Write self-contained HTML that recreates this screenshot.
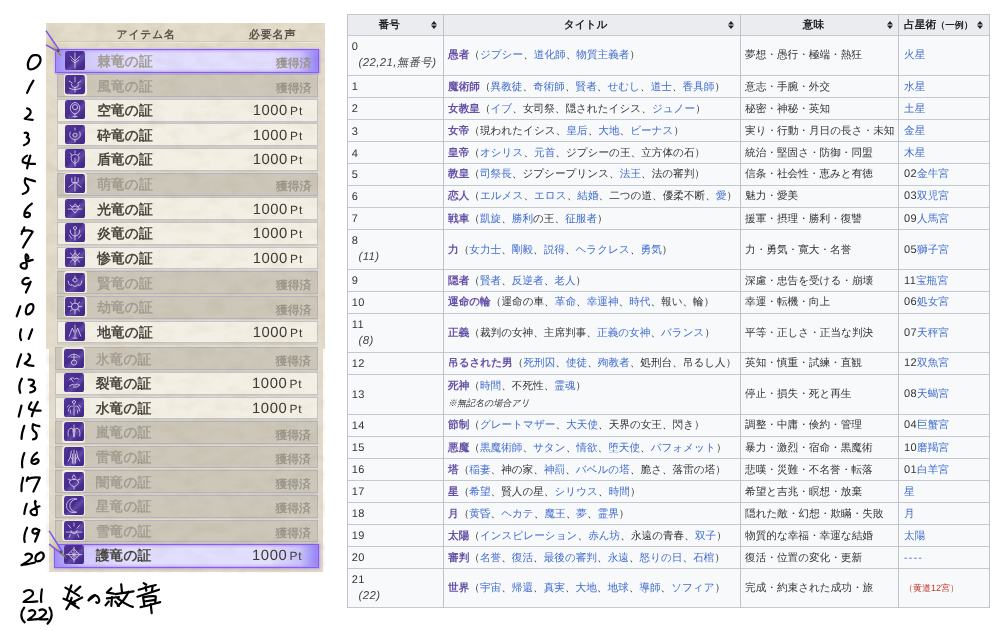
<!DOCTYPE html><html><head><meta charset="utf-8"><style>
*{margin:0;padding:0;box-sizing:border-box}
html,body{width:1000px;height:630px;overflow:hidden;background:#fff;text-rendering:geometricPrecision;font-family:"Liberation Sans",sans-serif;position:relative}
.a{position:absolute}
.hl{position:absolute;height:1px;background:#c4c9d0}
.vl{position:absolute;width:1px;background:#bfc4cc}
.tt{position:absolute;font-size:10.63px;line-height:12px;white-space:nowrap;color:#333}
.th{position:absolute;font-size:10.7px;line-height:12px;white-space:nowrap;color:#222;font-weight:bold}
.b{color:#6551a8;font-weight:bold}
.l{color:#3f6ccf}
.it{font-style:italic;color:#444}
.sort{position:absolute;width:6px;height:8px}
.ic{position:absolute;width:19px;height:19px}
.nm{position:absolute;font-size:13.8px;line-height:16px;font-weight:bold;white-space:nowrap}
.gk{position:absolute;font-size:11.8px;line-height:14px;color:#9d988e;font-weight:bold;white-space:nowrap}
.pt{position:absolute;font-size:14.8px;line-height:16px;color:#3d3b36;white-space:nowrap;letter-spacing:0.55px}
.pt span{font-size:12px;margin-left:2.3px;letter-spacing:0.8px}
</style></head><body>
<div class="a" style="left:347px;top:14px;width:642px;height:593.3px;background:#f8f9fa"></div>
<div class="a" style="left:347px;top:14px;width:642px;height:21.299999999999997px;background:#eaecf0"></div>
<div class="hl" style="left:346.5px;top:13.5px;width:643px"></div>
<div class="hl" style="left:346.5px;top:34.8px;width:643px"></div>
<div class="hl" style="left:346.5px;top:74.8px;width:643px"></div>
<div class="hl" style="left:346.5px;top:97.0px;width:643px"></div>
<div class="hl" style="left:346.5px;top:119.0px;width:643px"></div>
<div class="hl" style="left:346.5px;top:141.2px;width:643px"></div>
<div class="hl" style="left:346.5px;top:162.9px;width:643px"></div>
<div class="hl" style="left:346.5px;top:184.6px;width:643px"></div>
<div class="hl" style="left:346.5px;top:206.8px;width:643px"></div>
<div class="hl" style="left:346.5px;top:228.9px;width:643px"></div>
<div class="hl" style="left:346.5px;top:268.9px;width:643px"></div>
<div class="hl" style="left:346.5px;top:290.8px;width:643px"></div>
<div class="hl" style="left:346.5px;top:312.7px;width:643px"></div>
<div class="hl" style="left:346.5px;top:351.7px;width:643px"></div>
<div class="hl" style="left:346.5px;top:373.6px;width:643px"></div>
<div class="hl" style="left:346.5px;top:413.6px;width:643px"></div>
<div class="hl" style="left:346.5px;top:435.6px;width:643px"></div>
<div class="hl" style="left:346.5px;top:458.1px;width:643px"></div>
<div class="hl" style="left:346.5px;top:480.0px;width:643px"></div>
<div class="hl" style="left:346.5px;top:502.0px;width:643px"></div>
<div class="hl" style="left:346.5px;top:524.0px;width:643px"></div>
<div class="hl" style="left:346.5px;top:546.0px;width:643px"></div>
<div class="hl" style="left:346.5px;top:567.9px;width:643px"></div>
<div class="hl" style="left:346.5px;top:606.8px;width:643px"></div>
<div class="vl" style="left:346.5px;top:14px;height:593.8px"></div>
<div class="vl" style="left:442.8px;top:14px;height:593.8px"></div>
<div class="vl" style="left:740.0px;top:14px;height:593.8px"></div>
<div class="vl" style="left:897.8px;top:14px;height:593.8px"></div>
<div class="vl" style="left:988.5px;top:14px;height:593.8px"></div>
<div class="th" style="left:350px;width:78.30000000000001px;top:18.8px;text-align:center">番号</div>
<svg class="sort" style="left:431.3px;top:20.6px" viewBox="0 0 7 9" preserveAspectRatio="none"><path d="M3.5 0 L7 4 L0 4 Z M0 5 L7 5 L3.5 9 Z" fill="#222"/></svg>
<div class="th" style="left:446.0px;width:279.2px;top:18.8px;text-align:center">タイトル</div>
<svg class="sort" style="left:728.3px;top:20.6px" viewBox="0 0 7 9" preserveAspectRatio="none"><path d="M3.5 0 L7 4 L0 4 Z M0 5 L7 5 L3.5 9 Z" fill="#222"/></svg>
<div class="th" style="left:743.5px;width:139.79999999999995px;top:18.8px;text-align:center">意味</div>
<svg class="sort" style="left:886.7px;top:20.6px" viewBox="0 0 7 9" preserveAspectRatio="none"><path d="M3.5 0 L7 4 L0 4 Z M0 5 L7 5 L3.5 9 Z" fill="#222"/></svg>
<div class="th" style="left:904px;top:18.8px">占星術<span style="font-size:9.2px">（一例）</span></div>
<svg class="sort" style="left:976.7px;top:20.6px" viewBox="0 0 7 9" preserveAspectRatio="none"><path d="M3.5 0 L7 4 L0 4 Z M0 5 L7 5 L3.5 9 Z" fill="#222"/></svg>
<div class="tt" style="left:351.8px;top:40.6px;font-size:11px;letter-spacing:0.4px">0</div>
<div class="tt it" style="left:358.5px;top:57.3px;font-size:11.4px;letter-spacing:0.4px">(22,21,無番号)</div>
<div class="tt" style="left:448px;top:49.4px"><span class="b">愚者</span>（<span class="l">ジプシー</span>、<span class="l">道化師</span>、<span class="l">物質主義者</span>）</div>
<div class="tt" style="left:745px;top:49.4px">夢想・愚行・極端・熱狂</div>
<div class="tt" style="left:904px;top:49.4px"><span class="l">火星</span></div>
<div class="tt" style="left:351.8px;top:81.3px;font-size:11px;letter-spacing:0.4px">1</div>
<div class="tt" style="left:448px;top:80.5px"><span class="b">魔術師</span>（<span class="l">異教徒</span>、<span class="l">奇術師</span>、<span class="l">賢者</span>、<span class="l">せむし</span>、<span class="l">道士</span>、<span class="l">香具師</span>）</div>
<div class="tt" style="left:745px;top:80.5px">意志・手腕・外交</div>
<div class="tt" style="left:904px;top:80.5px"><span class="l">水星</span></div>
<div class="tt" style="left:351.8px;top:103.4px;font-size:11px;letter-spacing:0.4px">2</div>
<div class="tt" style="left:448px;top:102.6px"><span class="b">女教皇</span>（<span class="l">イブ</span>、女司祭、隠されたイシス、<span class="l">ジュノー</span>）</div>
<div class="tt" style="left:745px;top:102.6px">秘密・神秘・英知</div>
<div class="tt" style="left:904px;top:102.6px"><span class="l">土星</span></div>
<div class="tt" style="left:351.8px;top:125.5px;font-size:11px;letter-spacing:0.4px">3</div>
<div class="tt" style="left:448px;top:124.7px"><span class="b">女帝</span>（現われたイシス、<span class="l">皇后</span>、<span class="l">大地</span>、<span class="l">ビーナス</span>）</div>
<div class="tt" style="left:745px;top:124.7px">実り・行動・月日の長さ・未知</div>
<div class="tt" style="left:904px;top:124.7px"><span class="l">金星</span></div>
<div class="tt" style="left:351.8px;top:147.5px;font-size:11px;letter-spacing:0.4px">4</div>
<div class="tt" style="left:448px;top:146.7px"><span class="b">皇帝</span>（<span class="l">オシリス</span>、<span class="l">元首</span>、ジプシーの王、立方体の石）</div>
<div class="tt" style="left:745px;top:146.7px">統治・堅固さ・防御・同盟</div>
<div class="tt" style="left:904px;top:146.7px"><span class="l">木星</span></div>
<div class="tt" style="left:351.8px;top:169.2px;font-size:11px;letter-spacing:0.4px">5</div>
<div class="tt" style="left:448px;top:168.3px"><span class="b">教皇</span>（<span class="l">司祭長</span>、ジプシープリンス、<span class="l">法王</span>、法の審判）</div>
<div class="tt" style="left:745px;top:168.3px">信条・社会性・恵みと有徳</div>
<div class="tt" style="left:904px;top:168.3px"><span style="font-size:11px;letter-spacing:0.4px">02</span><span class="l">金牛宮</span></div>
<div class="tt" style="left:351.8px;top:191.1px;font-size:11px;letter-spacing:0.4px">6</div>
<div class="tt" style="left:448px;top:190.3px"><span class="b">恋人</span>（<span class="l">エルメス</span>、<span class="l">エロス</span>、<span class="l">結婚</span>、二つの道、優柔不断、<span class="l">愛</span>）</div>
<div class="tt" style="left:745px;top:190.3px">魅力・愛美</div>
<div class="tt" style="left:904px;top:190.3px"><span style="font-size:11px;letter-spacing:0.4px">03</span><span class="l">双児宮</span></div>
<div class="tt" style="left:351.8px;top:213.3px;font-size:11px;letter-spacing:0.4px">7</div>
<div class="tt" style="left:448px;top:212.5px"><span class="b">戦車</span>（<span class="l">凱旋</span>、<span class="l">勝利</span>の王、<span class="l">征服者</span>）</div>
<div class="tt" style="left:745px;top:212.5px">援軍・摂理・勝利・復讐</div>
<div class="tt" style="left:904px;top:212.5px"><span style="font-size:11px;letter-spacing:0.4px">09</span><span class="l">人馬宮</span></div>
<div class="tt" style="left:351.8px;top:234.7px;font-size:11px;letter-spacing:0.4px">8</div>
<div class="tt it" style="left:358.5px;top:251.4px;font-size:11.4px;letter-spacing:0.4px">(11)</div>
<div class="tt" style="left:448px;top:243.5px"><span class="b">力</span>（<span class="l">女力士</span>、<span class="l">剛毅</span>、<span class="l">説得</span>、<span class="l">ヘラクレス</span>、<span class="l">勇気</span>）</div>
<div class="tt" style="left:745px;top:243.5px">力・勇気・寛大・名誉</div>
<div class="tt" style="left:904px;top:243.5px"><span style="font-size:11px;letter-spacing:0.4px">05</span><span class="l">獅子宮</span></div>
<div class="tt" style="left:351.8px;top:275.2px;font-size:11px;letter-spacing:0.4px">9</div>
<div class="tt" style="left:448px;top:274.5px"><span class="b">隠者</span>（<span class="l">賢者</span>、<span class="l">反逆者</span>、<span class="l">老人</span>）</div>
<div class="tt" style="left:745px;top:274.5px">深慮・忠告を受ける・崩壊</div>
<div class="tt" style="left:904px;top:274.5px"><span style="font-size:11px;letter-spacing:0.4px">11</span><span class="l">宝瓶宮</span></div>
<div class="tt" style="left:351.8px;top:297.1px;font-size:11px;letter-spacing:0.4px">10</div>
<div class="tt" style="left:448px;top:296.4px"><span class="b">運命の輪</span>（運命の車、<span class="l">革命</span>、<span class="l">幸運神</span>、<span class="l">時代</span>、報い、輪）</div>
<div class="tt" style="left:745px;top:296.4px">幸運・転機・向上</div>
<div class="tt" style="left:904px;top:296.4px"><span style="font-size:11px;letter-spacing:0.4px">06</span><span class="l">処女宮</span></div>
<div class="tt" style="left:351.8px;top:318.5px;font-size:11px;letter-spacing:0.4px">11</div>
<div class="tt it" style="left:358.5px;top:335.2px;font-size:11.4px;letter-spacing:0.4px">(8)</div>
<div class="tt" style="left:448px;top:326.8px"><span class="b">正義</span>（裁判の女神、主席判事、<span class="l">正義の女神</span>、<span class="l">バランス</span>）</div>
<div class="tt" style="left:745px;top:326.8px">平等・正しさ・正当な判決</div>
<div class="tt" style="left:904px;top:326.8px"><span style="font-size:11px;letter-spacing:0.4px">07</span><span class="l">天秤宮</span></div>
<div class="tt" style="left:351.8px;top:358.0px;font-size:11px;letter-spacing:0.4px">12</div>
<div class="tt" style="left:448px;top:357.2px"><span class="b">吊るされた男</span>（<span class="l">死刑囚</span>、<span class="l">使徒</span>、<span class="l">殉教者</span>、処刑台、吊るし人）</div>
<div class="tt" style="left:745px;top:357.2px">英知・慎重・試練・直観</div>
<div class="tt" style="left:904px;top:357.2px"><span style="font-size:11px;letter-spacing:0.4px">12</span><span class="l">双魚宮</span></div>
<div class="tt" style="left:351.8px;top:389.0px;font-size:11px;letter-spacing:0.4px">13</div>
<div class="tt" style="left:448px;top:380.4px"><span class="b">死神</span>（<span class="l">時間</span>、不死性、<span class="l">霊魂</span>）</div>
<div class="tt it" style="left:448px;top:397.4px;font-size:9px;color:#333">※無記名の場合アリ</div>
<div class="tt" style="left:745px;top:388.2px">停止・損失・死と再生</div>
<div class="tt" style="left:904px;top:388.2px"><span style="font-size:11px;letter-spacing:0.4px">08</span><span class="l">天蝎宮</span></div>
<div class="tt" style="left:351.8px;top:420.0px;font-size:11px;letter-spacing:0.4px">14</div>
<div class="tt" style="left:448px;top:419.2px"><span class="b">節制</span>（<span class="l">グレートマザー</span>、<span class="l">大天使</span>、天界の女王、閃き）</div>
<div class="tt" style="left:745px;top:419.2px">調整・中庸・倹約・管理</div>
<div class="tt" style="left:904px;top:419.2px"><span style="font-size:11px;letter-spacing:0.4px">04</span><span class="l">巨蟹宮</span></div>
<div class="tt" style="left:351.8px;top:442.2px;font-size:11px;letter-spacing:0.4px">15</div>
<div class="tt" style="left:448px;top:441.5px"><span class="b">悪魔</span>（<span class="l">黒魔術師</span>、<span class="l">サタン</span>、<span class="l">情欲</span>、<span class="l">堕天使</span>、<span class="l">バフォメット</span>）</div>
<div class="tt" style="left:745px;top:441.5px">暴力・激烈・宿命・黒魔術</div>
<div class="tt" style="left:904px;top:441.5px"><span style="font-size:11px;letter-spacing:0.4px">10</span><span class="l">磨羯宮</span></div>
<div class="tt" style="left:351.8px;top:464.4px;font-size:11px;letter-spacing:0.4px">16</div>
<div class="tt" style="left:448px;top:463.7px"><span class="b">塔</span>（<span class="l">稲妻</span>、神の家、<span class="l">神罰</span>、<span class="l">バベルの塔</span>、脆さ、落雷の塔）</div>
<div class="tt" style="left:745px;top:463.7px">悲嘆・災難・不名誉・転落</div>
<div class="tt" style="left:904px;top:463.7px"><span style="font-size:11px;letter-spacing:0.4px">01</span><span class="l">白羊宮</span></div>
<div class="tt" style="left:351.8px;top:486.4px;font-size:11px;letter-spacing:0.4px">17</div>
<div class="tt" style="left:448px;top:485.6px"><span class="b">星</span>（<span class="l">希望</span>、賢人の星、<span class="l">シリウス</span>、<span class="l">時間</span>）</div>
<div class="tt" style="left:745px;top:485.6px">希望と吉兆・瞑想・放棄</div>
<div class="tt" style="left:904px;top:485.6px"><span class="l">星</span></div>
<div class="tt" style="left:351.8px;top:508.4px;font-size:11px;letter-spacing:0.4px">18</div>
<div class="tt" style="left:448px;top:507.6px"><span class="b">月</span>（<span class="l">黄昏</span>、<span class="l">ヘカテ</span>、<span class="l">魔王</span>、<span class="l">夢</span>、<span class="l">霊界</span>）</div>
<div class="tt" style="left:745px;top:507.6px">隠れた敵・幻想・欺瞞・失敗</div>
<div class="tt" style="left:904px;top:507.6px"><span class="l">月</span></div>
<div class="tt" style="left:351.8px;top:530.4px;font-size:11px;letter-spacing:0.4px">19</div>
<div class="tt" style="left:448px;top:529.6px"><span class="b">太陽</span>（<span class="l">インスピレーション</span>、<span class="l">赤ん坊</span>、永遠の青春、<span class="l">双子</span>）</div>
<div class="tt" style="left:745px;top:529.6px">物質的な幸福・幸運な結婚</div>
<div class="tt" style="left:904px;top:529.6px"><span class="l">太陽</span></div>
<div class="tt" style="left:351.8px;top:552.4px;font-size:11px;letter-spacing:0.4px">20</div>
<div class="tt" style="left:448px;top:551.6px"><span class="b">審判</span>（<span class="l">名誉</span>、<span class="l">復活</span>、<span class="l">最後の審判</span>、<span class="l">永遠</span>、<span class="l">怒りの日</span>、<span class="l">石棺</span>）</div>
<div class="tt" style="left:745px;top:551.6px">復活・位置の変化・更新</div>
<div class="tt" style="left:904px;top:551.6px"><span class="l" style="letter-spacing:1.2px">----</span></div>
<div class="tt" style="left:351.8px;top:573.7px;font-size:11px;letter-spacing:0.4px">21</div>
<div class="tt it" style="left:358.5px;top:590.4px;font-size:11.4px;letter-spacing:0.4px">(22)</div>
<div class="tt" style="left:448px;top:581.9px"><span class="b">世界</span>（<span class="l">宇宙</span>、<span class="l">帰還</span>、<span class="l">真実</span>、<span class="l">大地</span>、<span class="l">地球</span>、<span class="l">導師</span>、<span class="l">ソフィア</span>）</div>
<div class="tt" style="left:745px;top:581.9px">完成・約束された成功・旅</div>
<div class="tt" style="left:904px;top:581.9px"><span style="color:#c0392b;font-size:9px;margin-left:0px">（黄道12宮）</span></div>
<svg width="0" height="0" style="position:absolute"><defs><linearGradient id="icg" x1="0" y1="0" x2="1" y2="1"><stop offset="0" stop-color="#54369c"/><stop offset="0.45" stop-color="#472c8e"/><stop offset="0.6" stop-color="#634aa9"/><stop offset="0.75" stop-color="#482e8f"/><stop offset="1" stop-color="#3f2787"/></linearGradient><filter id="tex" x="0" y="0" width="100%" height="100%"><feTurbulence type="fractalNoise" baseFrequency="0.08" numOctaves="3" seed="4"/><feColorMatrix type="matrix" values="0 0 0 0 0.55  0 0 0 0 0.5  0 0 0 0 0.38  0 0 0 -1.2 0.75"/></filter></defs></svg>
<div class="a" style="left:46px;top:22.7px;width:279px;height:326.5px;background:#e4ddcb"></div>
<div class="a" style="left:48.6px;top:349px;width:274.7px;height:223px;background:#e4ddcb"></div>
<svg class="a" style="left:46px;top:22.7px" width="279" height="550"><rect width="279" height="550" filter="url(#tex)" opacity="0.35"/></svg>
<div class="a" style="left:57px;top:40.8px;width:262px;height:1px;background:#d2cbb6"></div>
<div class="a" style="left:57px;top:42.3px;width:262px;height:1px;background:#ece7d9"></div>
<div class="a" style="left:116.5px;top:28px;font-size:10.8px;line-height:14px;font-weight:bold;color:#5a564e;letter-spacing:0.85px">アイテム名</div>
<div class="a" style="left:248.8px;top:28px;font-size:11px;line-height:14px;font-weight:bold;color:#5a564e;letter-spacing:0.9px">必要名声</div>
<div class="a" style="left:57.0px;top:72.3px;width:261.2px;height:1.6px;background:#d4cfb9"></div>
<div class="a" style="left:55.4px;top:48.9px;width:264.0px;height:24.2px;background:linear-gradient(90deg,#9f90f7 0%,#cfc8fc 10%,#e2defe 28%,#e2defe 82%,#cbc3fc 93%,#9483f6 100%);border:1.8px solid #8b5cf3;box-shadow:inset 0 0 3px 0.5px #a68ef7,0 0 2px 0.5px rgba(140,100,245,0.5)"></div>
<svg class="a" style="left:65.4px;top:50.7px" width="20" height="19.2" viewBox="0 0 19 19" preserveAspectRatio="none"><rect x="0" y="0" width="19" height="19" rx="2.4" fill="url(#icg)"/><path d="M9.5 2 V17 M5 5 L9.5 10 L14 5 M6 9 L9.5 12 L13 9" fill="none" stroke="#d8cfe8" stroke-width="0.85" stroke-linecap="round" stroke-linejoin="round"/></svg>
<div class="nm" style="left:97.2px;top:53.8px;color:#a39e94">棘竜の証</div>
<div class="gk" style="left:276.0px;top:56.0px">獲得済</div>
<div class="a" style="left:57.0px;top:97.0px;width:261.2px;height:1.6px;background:#d4cfb9"></div>
<div class="a" style="left:57.0px;top:74.2px;width:261.2px;height:22.8px;background:#cdc7b9;border:1px solid #b6b2c2"></div>
<div class="a" style="left:64.1px;top:74.3px;width:22.6px;height:21.4px;border-radius:3px;background:#f1ede3"></div>
<svg class="a" style="left:65.4px;top:75.4px" width="20" height="19.2" viewBox="0 0 19 19" preserveAspectRatio="none"><rect x="0" y="0" width="19" height="19" rx="2.4" fill="url(#icg)"/><path d="M9.5 2 V7 M6 9 a3.5 3.5 0 1 0 7 0 M4 6 L7 8 M15 6 L12 8 M4 13 Q9.5 16 15 13 M9.5 12 V17" fill="none" stroke="#d8cfe8" stroke-width="0.85" stroke-linecap="round" stroke-linejoin="round"/></svg>
<div class="nm" style="left:97.2px;top:78.5px;color:#a39e94">風竜の証</div>
<div class="gk" style="left:276.0px;top:80.7px">獲得済</div>
<div class="a" style="left:57.0px;top:121.6px;width:261.2px;height:1.6px;background:#d4cfb9"></div>
<div class="a" style="left:57.0px;top:98.8px;width:261.2px;height:22.8px;background:#f3efe4;border:1px solid #c5c2d2"></div>
<svg class="a" style="left:65.4px;top:100.0px" width="20" height="19.2" viewBox="0 0 19 19" preserveAspectRatio="none"><rect x="0" y="0" width="19" height="19" rx="2.4" fill="url(#icg)"/><path d="M9.5 2.5 C4 3 3 12 9.5 14 C16 12 15 3 9.5 2.5 M7 7 a2.5 2.5 0 1 0 5 0 a2.5 2.5 0 1 0 -5 0 M9.5 14 V17 M7.5 16.5 H11.5" fill="none" stroke="#d8cfe8" stroke-width="0.85" stroke-linecap="round" stroke-linejoin="round"/></svg>
<div class="nm" style="left:97.2px;top:103.1px;color:#4a4740">空竜の証</div>
<div class="pt" style="left:252.7px;top:103.1px">1000<span>Pt</span></div>
<div class="a" style="left:57.0px;top:146.2px;width:261.2px;height:1.6px;background:#d4cfb9"></div>
<div class="a" style="left:57.0px;top:123.4px;width:261.2px;height:22.8px;background:#f3efe4;border:1px solid #c5c2d2"></div>
<svg class="a" style="left:65.4px;top:124.6px" width="20" height="19.2" viewBox="0 0 19 19" preserveAspectRatio="none"><rect x="0" y="0" width="19" height="19" rx="2.4" fill="url(#icg)"/><path d="M9.5 3 V5 M5 7 Q3.5 11 6 13 Q9.5 16 13 13 Q15.5 11 14 7 M7.5 10 a2 2 0 1 0 4 0 a2 2 0 1 0 -4 0 M9.5 15 V17" fill="none" stroke="#d8cfe8" stroke-width="0.85" stroke-linecap="round" stroke-linejoin="round"/></svg>
<div class="nm" style="left:97.2px;top:127.7px;color:#4a4740">砕竜の証</div>
<div class="pt" style="left:252.7px;top:127.7px">1000<span>Pt</span></div>
<div class="a" style="left:57.0px;top:170.9px;width:261.2px;height:1.6px;background:#d4cfb9"></div>
<div class="a" style="left:57.0px;top:148.1px;width:261.2px;height:22.8px;background:#f3efe4;border:1px solid #c5c2d2"></div>
<svg class="a" style="left:65.4px;top:149.3px" width="20" height="19.2" viewBox="0 0 19 19" preserveAspectRatio="none"><rect x="0" y="0" width="19" height="19" rx="2.4" fill="url(#icg)"/><path d="M9.5 2 V4 M5 4 L6.5 6 M14 4 L12.5 6 M6 7 C5 12 8 14 9.5 14 C11 14 14 12 13 7 C12 5 7 5 6 7 M9.5 9 V17" fill="none" stroke="#d8cfe8" stroke-width="0.85" stroke-linecap="round" stroke-linejoin="round"/></svg>
<div class="nm" style="left:97.2px;top:152.4px;color:#4a4740">盾竜の証</div>
<div class="pt" style="left:252.7px;top:152.4px">1000<span>Pt</span></div>
<div class="a" style="left:57.0px;top:195.6px;width:261.2px;height:1.6px;background:#d4cfb9"></div>
<div class="a" style="left:57.0px;top:172.8px;width:261.2px;height:22.8px;background:#cdc7b9;border:1px solid #b6b2c2"></div>
<div class="a" style="left:64.1px;top:172.8px;width:22.6px;height:21.4px;border-radius:3px;background:#f1ede3"></div>
<svg class="a" style="left:65.4px;top:173.9px" width="20" height="19.2" viewBox="0 0 19 19" preserveAspectRatio="none"><rect x="0" y="0" width="19" height="19" rx="2.4" fill="url(#icg)"/><path d="M9.5 3 V17 M6.5 4 V8 Q9.5 10 12.5 8 V4 M3.5 13 L9.5 8 L15.5 13" fill="none" stroke="#d8cfe8" stroke-width="0.85" stroke-linecap="round" stroke-linejoin="round"/></svg>
<div class="nm" style="left:97.2px;top:177.1px;color:#a39e94">萌竜の証</div>
<div class="gk" style="left:276.0px;top:179.2px">獲得済</div>
<div class="a" style="left:57.0px;top:220.2px;width:261.2px;height:1.6px;background:#d4cfb9"></div>
<div class="a" style="left:57.0px;top:197.4px;width:261.2px;height:22.8px;background:#f3efe4;border:1px solid #c5c2d2"></div>
<svg class="a" style="left:65.4px;top:198.6px" width="20" height="19.2" viewBox="0 0 19 19" preserveAspectRatio="none"><rect x="0" y="0" width="19" height="19" rx="2.4" fill="url(#icg)"/><path d="M3 10 H16 M5 6 Q6 9 9.5 7 Q13 9 14 6 M9.5 5 L6 9.5 L9.5 14 L13 9.5 Z" fill="none" stroke="#d8cfe8" stroke-width="0.85" stroke-linecap="round" stroke-linejoin="round"/></svg>
<div class="nm" style="left:97.2px;top:201.7px;color:#4a4740">光竜の証</div>
<div class="pt" style="left:252.7px;top:201.7px">1000<span>Pt</span></div>
<div class="a" style="left:57.0px;top:244.8px;width:261.2px;height:1.6px;background:#d4cfb9"></div>
<div class="a" style="left:57.0px;top:222.0px;width:261.2px;height:22.8px;background:#f3efe4;border:1px solid #c5c2d2"></div>
<svg class="a" style="left:65.4px;top:223.2px" width="20" height="19.2" viewBox="0 0 19 19" preserveAspectRatio="none"><rect x="0" y="0" width="19" height="19" rx="2.4" fill="url(#icg)"/><path d="M8 5 a1.5 1.5 0 1 0 3 0 a1.5 1.5 0 1 0 -3 0 M9.5 7 V17 M5 7 Q4.5 12 9.5 13 Q14.5 12 14 7 M4 12 L6 15 M15 12 L13 15" fill="none" stroke="#d8cfe8" stroke-width="0.85" stroke-linecap="round" stroke-linejoin="round"/></svg>
<div class="nm" style="left:97.2px;top:226.3px;color:#4a4740">炎竜の証</div>
<div class="pt" style="left:252.7px;top:226.3px">1000<span>Pt</span></div>
<div class="a" style="left:57.0px;top:269.5px;width:261.2px;height:1.6px;background:#d4cfb9"></div>
<div class="a" style="left:57.0px;top:246.7px;width:261.2px;height:22.8px;background:#f3efe4;border:1px solid #c5c2d2"></div>
<svg class="a" style="left:65.4px;top:247.9px" width="20" height="19.2" viewBox="0 0 19 19" preserveAspectRatio="none"><rect x="0" y="0" width="19" height="19" rx="2.4" fill="url(#icg)"/><path d="M9.5 2 V17 M2 9.5 H17 M5 5 L14 14 M14 5 L5 14 M9.5 5 L6 9.5 L9.5 14 L13 9.5 Z" fill="none" stroke="#d8cfe8" stroke-width="0.85" stroke-linecap="round" stroke-linejoin="round"/></svg>
<div class="nm" style="left:97.2px;top:251.0px;color:#4a4740">惨竜の証</div>
<div class="pt" style="left:252.7px;top:251.0px">1000<span>Pt</span></div>
<div class="a" style="left:57.0px;top:294.2px;width:261.2px;height:1.6px;background:#d4cfb9"></div>
<div class="a" style="left:57.0px;top:271.4px;width:261.2px;height:22.8px;background:#cdc7b9;border:1px solid #b6b2c2"></div>
<div class="a" style="left:64.1px;top:271.4px;width:22.6px;height:21.4px;border-radius:3px;background:#f1ede3"></div>
<svg class="a" style="left:65.4px;top:272.6px" width="20" height="19.2" viewBox="0 0 19 19" preserveAspectRatio="none"><rect x="0" y="0" width="19" height="19" rx="2.4" fill="url(#icg)"/><path d="M3 8 Q4 14 6.5 12 M16 8 Q15 14 12.5 12 M6 11 Q9.5 16 13 11 M7.5 7 a2 2 0 1 0 4 0 a2 2 0 1 0 -4 0 M9.5 3 V5" fill="none" stroke="#d8cfe8" stroke-width="0.85" stroke-linecap="round" stroke-linejoin="round"/></svg>
<div class="nm" style="left:97.2px;top:275.7px;color:#a39e94">賢竜の証</div>
<div class="gk" style="left:276.0px;top:277.9px">獲得済</div>
<div class="a" style="left:57.0px;top:318.8px;width:261.2px;height:1.6px;background:#d4cfb9"></div>
<div class="a" style="left:57.0px;top:296.0px;width:261.2px;height:22.8px;background:#cdc7b9;border:1px solid #b6b2c2"></div>
<div class="a" style="left:64.1px;top:296.1px;width:22.6px;height:21.4px;border-radius:3px;background:#f1ede3"></div>
<svg class="a" style="left:65.4px;top:297.2px" width="20" height="19.2" viewBox="0 0 19 19" preserveAspectRatio="none"><rect x="0" y="0" width="19" height="19" rx="2.4" fill="url(#icg)"/><path d="M6 9.5 a3.5 3.5 0 1 0 7 0 a3.5 3.5 0 1 0 -7 0 M9.5 2 V6 M9.5 13 V17 M3 9.5 H6 M13 9.5 H16 M5 5 L7 7 M14 5 L12 7 M5 14 L7 12 M14 14 L12 12" fill="none" stroke="#d8cfe8" stroke-width="0.85" stroke-linecap="round" stroke-linejoin="round"/></svg>
<div class="nm" style="left:97.2px;top:300.3px;color:#a39e94">劫竜の証</div>
<div class="gk" style="left:276.0px;top:302.5px">獲得済</div>
<div class="a" style="left:57.0px;top:343.4px;width:261.2px;height:1.6px;background:#d4cfb9"></div>
<div class="a" style="left:57.0px;top:320.6px;width:261.2px;height:22.8px;background:#f3efe4;border:1px solid #c5c2d2"></div>
<svg class="a" style="left:65.4px;top:321.8px" width="20" height="19.2" viewBox="0 0 19 19" preserveAspectRatio="none"><rect x="0" y="0" width="19" height="19" rx="2.4" fill="url(#icg)"/><path d="M9.5 3 V16 M7.5 16 H11.5 M4 14 L7 6 L8.5 10 M15 14 L12 6 L10.5 10" fill="none" stroke="#d8cfe8" stroke-width="0.85" stroke-linecap="round" stroke-linejoin="round"/></svg>
<div class="nm" style="left:97.2px;top:324.9px;color:#4a4740">地竜の証</div>
<div class="pt" style="left:252.7px;top:324.9px">1000<span>Pt</span></div>
<div class="a" style="left:55.2px;top:370.1px;width:262.4px;height:1.6px;background:#d4cfb9"></div>
<div class="a" style="left:55.2px;top:347.3px;width:262.4px;height:22.8px;background:#cdc7b9;border:1px solid #b6b2c2"></div>
<div class="a" style="left:62.3px;top:347.4px;width:22.6px;height:21.4px;border-radius:3px;background:#f1ede3"></div>
<svg class="a" style="left:63.6px;top:348.5px" width="20" height="19.2" viewBox="0 0 19 19" preserveAspectRatio="none"><rect x="0" y="0" width="19" height="19" rx="2.4" fill="url(#icg)"/><path d="M4 8 Q9.5 2 15 8 M9.5 5 V11 M6.5 8 H12.5 M7 13.5 a2.5 2.5 0 1 0 5 0 a2.5 2.5 0 1 0 -5 0" fill="none" stroke="#d8cfe8" stroke-width="0.85" stroke-linecap="round" stroke-linejoin="round"/></svg>
<div class="nm" style="left:95.8px;top:351.6px;color:#a39e94">氷竜の証</div>
<div class="gk" style="left:275.4px;top:353.8px">獲得済</div>
<div class="a" style="left:55.2px;top:394.7px;width:262.4px;height:1.6px;background:#d4cfb9"></div>
<div class="a" style="left:55.2px;top:371.9px;width:262.4px;height:22.8px;background:#f3efe4;border:1px solid #c5c2d2"></div>
<svg class="a" style="left:63.6px;top:373.1px" width="20" height="19.2" viewBox="0 0 19 19" preserveAspectRatio="none"><rect x="0" y="0" width="19" height="19" rx="2.4" fill="url(#icg)"/><path d="M5 7 Q8 3 10 6 Q12 4 14 6 M6 5 L9 9 M5 13 Q8 10 10 12 Q13 10 15 12 Q12 15 9 14" fill="none" stroke="#d8cfe8" stroke-width="0.85" stroke-linecap="round" stroke-linejoin="round"/></svg>
<div class="nm" style="left:95.8px;top:376.2px;color:#4a4740">裂竜の証</div>
<div class="pt" style="left:252.1px;top:376.2px">1000<span>Pt</span></div>
<div class="a" style="left:55.2px;top:419.3px;width:262.4px;height:1.6px;background:#d4cfb9"></div>
<div class="a" style="left:55.2px;top:396.5px;width:262.4px;height:22.8px;background:#f3efe4;border:1px solid #c5c2d2"></div>
<svg class="a" style="left:63.6px;top:397.7px" width="20" height="19.2" viewBox="0 0 19 19" preserveAspectRatio="none"><rect x="0" y="0" width="19" height="19" rx="2.4" fill="url(#icg)"/><path d="M8 4 a1.5 1.5 0 1 0 3 0 a1.5 1.5 0 1 0 -3 0 M9.5 6 V17 M4 13 Q5 7 8 8 M15 13 Q14 7 11 8 M3 9 L5 7 M16 9 L14 7 M6 12 V15 M13 12 V15" fill="none" stroke="#d8cfe8" stroke-width="0.85" stroke-linecap="round" stroke-linejoin="round"/></svg>
<div class="nm" style="left:95.8px;top:400.8px;color:#4a4740">水竜の証</div>
<div class="pt" style="left:252.1px;top:400.8px">1000<span>Pt</span></div>
<div class="a" style="left:55.2px;top:443.9px;width:262.4px;height:1.6px;background:#d4cfb9"></div>
<div class="a" style="left:55.2px;top:421.1px;width:262.4px;height:22.8px;background:#cdc7b9;border:1px solid #b6b2c2"></div>
<div class="a" style="left:62.3px;top:421.2px;width:22.6px;height:21.4px;border-radius:3px;background:#f1ede3"></div>
<svg class="a" style="left:63.6px;top:422.3px" width="20" height="19.2" viewBox="0 0 19 19" preserveAspectRatio="none"><rect x="0" y="0" width="19" height="19" rx="2.4" fill="url(#icg)"/><path d="M9.5 3 V5 M9.5 6 L8.5 9 L9.5 15 L10.5 9 Z M4 14 Q3 6 7.5 6 Q9 8 9.5 10 M15 14 Q16 6 11.5 6 Q10 8 9.5 10" fill="none" stroke="#d8cfe8" stroke-width="0.85" stroke-linecap="round" stroke-linejoin="round"/></svg>
<div class="nm" style="left:95.8px;top:425.4px;color:#a39e94">嵐竜の証</div>
<div class="gk" style="left:275.4px;top:427.6px">獲得済</div>
<div class="a" style="left:55.2px;top:468.5px;width:262.4px;height:1.6px;background:#d4cfb9"></div>
<div class="a" style="left:55.2px;top:445.7px;width:262.4px;height:22.8px;background:#cdc7b9;border:1px solid #b6b2c2"></div>
<div class="a" style="left:62.3px;top:445.8px;width:22.6px;height:21.4px;border-radius:3px;background:#f1ede3"></div>
<svg class="a" style="left:63.6px;top:446.9px" width="20" height="19.2" viewBox="0 0 19 19" preserveAspectRatio="none"><rect x="0" y="0" width="19" height="19" rx="2.4" fill="url(#icg)"/><path d="M9.5 3 V17 M7 4 L6 10 L4 14 M12 4 L13 10 L15 14 M6 10 L8 12 M13 10 L11 12 M8 7 V16 M11 7 V16" fill="none" stroke="#d8cfe8" stroke-width="0.85" stroke-linecap="round" stroke-linejoin="round"/></svg>
<div class="nm" style="left:95.8px;top:450.0px;color:#a39e94">雷竜の証</div>
<div class="gk" style="left:275.4px;top:452.2px">獲得済</div>
<div class="a" style="left:55.2px;top:493.1px;width:262.4px;height:1.6px;background:#d4cfb9"></div>
<div class="a" style="left:55.2px;top:470.3px;width:262.4px;height:22.8px;background:#cdc7b9;border:1px solid #b6b2c2"></div>
<div class="a" style="left:62.3px;top:470.4px;width:22.6px;height:21.4px;border-radius:3px;background:#f1ede3"></div>
<svg class="a" style="left:63.6px;top:471.5px" width="20" height="19.2" viewBox="0 0 19 19" preserveAspectRatio="none"><rect x="0" y="0" width="19" height="19" rx="2.4" fill="url(#icg)"/><path d="M9.5 3 L11 5.5 L9.5 8 L8 5.5 Z M4 7 L6 8 L5 11 L7 13 L9.5 15 L12 13 L14 11 L13 8 L15 7 M9.5 15 V17 M6 8 Q9.5 6 13 8" fill="none" stroke="#d8cfe8" stroke-width="0.85" stroke-linecap="round" stroke-linejoin="round"/></svg>
<div class="nm" style="left:95.8px;top:474.6px;color:#a39e94">闇竜の証</div>
<div class="gk" style="left:275.4px;top:476.8px">獲得済</div>
<div class="a" style="left:55.2px;top:517.7px;width:262.4px;height:1.6px;background:#d4cfb9"></div>
<div class="a" style="left:55.2px;top:494.9px;width:262.4px;height:22.8px;background:#cdc7b9;border:1px solid #b6b2c2"></div>
<div class="a" style="left:62.3px;top:495.0px;width:22.6px;height:21.4px;border-radius:3px;background:#f1ede3"></div>
<svg class="a" style="left:63.6px;top:496.1px" width="20" height="19.2" viewBox="0 0 19 19" preserveAspectRatio="none"><rect x="0" y="0" width="19" height="19" rx="2.4" fill="url(#icg)"/><path d="M12 3 A7 7 0 1 0 12 16 A5 5 0 1 1 12 3" fill="none" stroke="#d8cfe8" stroke-width="0.85" stroke-linecap="round" stroke-linejoin="round"/></svg>
<div class="nm" style="left:95.8px;top:499.2px;color:#a39e94">星竜の証</div>
<div class="gk" style="left:275.4px;top:501.4px">獲得済</div>
<div class="a" style="left:55.2px;top:542.3px;width:262.4px;height:1.6px;background:#d4cfb9"></div>
<div class="a" style="left:55.2px;top:519.5px;width:262.4px;height:22.8px;background:#cdc7b9;border:1px solid #b6b2c2"></div>
<div class="a" style="left:62.3px;top:519.6px;width:22.6px;height:21.4px;border-radius:3px;background:#f1ede3"></div>
<svg class="a" style="left:63.6px;top:520.7px" width="20" height="19.2" viewBox="0 0 19 19" preserveAspectRatio="none"><rect x="0" y="0" width="19" height="19" rx="2.4" fill="url(#icg)"/><path d="M6.5 9.5 a3 3 0 1 0 6 0 M2 11 H17 M9.5 2 V5 M4 4 L6.5 7 M15 4 L12.5 7 M6 13 L5 16 M13 13 L14 16" fill="none" stroke="#d8cfe8" stroke-width="0.85" stroke-linecap="round" stroke-linejoin="round"/></svg>
<div class="nm" style="left:95.8px;top:523.8px;color:#a39e94">雪竜の証</div>
<div class="gk" style="left:275.4px;top:526.0px">獲得済</div>
<div class="a" style="left:55.2px;top:566.9px;width:262.4px;height:1.6px;background:#d4cfb9"></div>
<div class="a" style="left:54.3px;top:543.5px;width:264.5px;height:24.2px;background:linear-gradient(90deg,#9f90f7 0%,#cfc8fc 10%,#e2defe 28%,#e2defe 82%,#cbc3fc 93%,#9483f6 100%);border:1.8px solid #8b5cf3;box-shadow:inset 0 0 3px 0.5px #a68ef7,0 0 2px 0.5px rgba(140,100,245,0.5)"></div>
<svg class="a" style="left:63.6px;top:545.3px" width="20" height="19.2" viewBox="0 0 19 19" preserveAspectRatio="none"><rect x="0" y="0" width="19" height="19" rx="2.4" fill="url(#icg)"/><path d="M9.5 2 V17 M2 9.5 H17 M9.5 4 L15 9.5 L9.5 15 L4 9.5 Z M7 7 L12 12 M12 7 L7 12" fill="none" stroke="#d8cfe8" stroke-width="0.85" stroke-linecap="round" stroke-linejoin="round"/></svg>
<div class="nm" style="left:95.8px;top:548.4px;color:#4a4740">護竜の証</div>
<div class="pt" style="left:252.1px;top:548.4px">1000<span>Pt</span></div>
<svg width="0" height="0" style="position:absolute"><defs><filter id="tex2" x="0" y="0" width="100%" height="100%"><feTurbulence type="fractalNoise" baseFrequency="0.05 0.09" numOctaves="4" seed="11"/><feColorMatrix type="matrix" values="0 0 0 0 0.6  0 0 0 0 0.55  0 0 0 0 0.42  0 0 0 -2.2 1.25"/></filter></defs></svg>
<svg class="a" style="left:46px;top:22.7px;mix-blend-mode:multiply" width="279" height="550"><rect width="279" height="550" filter="url(#tex2)" opacity="0.15"/></svg>
<svg width="0" height="0" style="position:absolute"><defs><linearGradient id="quill" x1="0" y1="0" x2="1" y2="1"><stop offset="0" stop-color="#efe6d8"/><stop offset="0.5" stop-color="#cfc49a"/><stop offset="1" stop-color="#8a7d48"/></linearGradient></defs></svg>
<svg class="a" style="left:0;top:0" width="80" height="630" viewBox="0 0 80 630"><path d="M46,30.8 L61.7,56.6 L46,44.8 Z" fill="url(#quill)"/><path d="M55.2,47.6 L61.7,56.6 L57.2,51.6 Z" fill="#6f6438"/><circle cx="58.2" cy="50.6" r="1.3" fill="#3a3520"/><path d="M46,30.8 L59.7,50.6" stroke="#7b55ee" stroke-width="1.5" fill="none"/><path d="M46,44.8 L57.7,51.4" stroke="#7b55ee" stroke-width="1.5" fill="none"/></svg>
<svg class="a" style="left:0;top:0" width="80" height="630" viewBox="0 0 80 630"><path d="M49.1,530.9 L66.9,558.9 L49.1,544.2 Z" fill="url(#quill)"/><path d="M58,549 L66.9,558.9 L60,553 Z" fill="#6f6438"/><circle cx="61" cy="552" r="1.3" fill="#3a3520"/><path d="M49.1,530.9 L62.5,552" stroke="#7b55ee" stroke-width="1.5" fill="none"/><path d="M49.1,544.2 L60.5,552.8" stroke="#7b55ee" stroke-width="1.5" fill="none"/></svg>
<svg class="a" style="left:0;top:0" width="170" height="630"><g fill="none" stroke="#000" stroke-width="2.2" stroke-linecap="round" stroke-linejoin="round"><path d="M35,55.2 C29.9,54.8 26.7,63.5 28.3,67.9 C29.9,71 37,68.7 39.8,63.1 C41.8,57.9 39.4,54.4 35,55.2"/><path d="M33.4,80.6 C31.1,84.1 28.7,88.9 27.1,92.9"/><path d="M27.1,108.3 C30.3,108.7 31.9,111.9 29.5,114.7 C27.9,116.3 25.9,117.9 24.7,118.7 C27.5,119.4 30.3,119.8 32.7,119.8"/><path d="M24.7,132.9 C27.9,132.1 29.5,134.5 26.7,137.3 C29.9,138.1 30.7,142.9 23.9,145.2"/><path d="M27.1,155.6 C24.3,157.1 21.5,159.9 22.7,161.9 C25.9,163.5 30.7,163.9 35,163.9 M30.3,155.6 C29.1,159.5 27.9,163.5 27.1,168.3"/><path d="M35,181.3 C31.5,180.2 28.3,179.4 25.5,178.2 C24.3,181 24.7,183.3 26.3,184.9 C29.5,187.7 29.5,192.1 22.7,194"/><path d="M31.9,203.6 C27.5,206.7 24.3,211.1 24.3,214.7 C24.3,217.9 29.5,217.9 29.9,215.1 C30.3,212.7 27.1,211.9 25.1,213.5"/><path d="M24.3,227.4 C23.5,229.8 22.3,231.7 21.5,234.1 M21.9,231.3 C25.9,230.1 29.9,229.8 32.7,231.7 C29.9,236.5 25.9,242.1 23.1,247.6"/><path d="M32.7,259.9 C28.3,261.1 24.3,262.3 21.5,263.9 C19.6,265.9 21.1,269 25.1,268.7 C27.9,267.9 26.7,263.5 25.9,259.5 C25.1,255.6 25.9,253.2 27.1,254.8 C28.3,256.3 28.7,257.9 27.9,258.7"/><path d="M28.7,278.2 C24.3,277 21.5,281 22.7,283.3 C24.3,285.3 29.9,284.1 30.7,281.7 C29.5,285.7 27.1,289.7 25.9,292.5"/><path d="M20.3,306.3 L16.7,316.3 M29.8,304.3 C25.9,305.1 24.7,313.9 27.1,314.3 C30.6,314.7 34.2,309.9 33.4,305.9 C33,303.9 31,303.7 29.8,304.3"/><path d="M21.1,329.3 C19.9,332.9 19.5,336.9 21.1,340.1 M32.2,329.3 L28.7,338.9"/><path d="M21.1,354.3 C19.5,358.3 17.9,363.1 17.1,366.7 M28.3,354 C31.4,355.1 30.6,359.9 24.7,363.5 C27.5,365.1 30.6,365.9 33.4,365.9"/><path d="M21.9,378.6 C19.5,382.9 18.3,387.7 20.3,392.8 M28.7,379.7 C35.4,378.9 35.4,383.7 30.6,385.7 C36.6,386.9 37,390.9 30.2,392.4"/><path d="M21.5,405.5 L18.7,416.6 M31.4,402.3 C29.8,404.7 28.3,407.1 29,408.7 C32.2,410.3 37,410.7 40.6,410.7 M37.8,401.9 C35.4,406.3 33,411.1 31.8,416.2"/><path d="M24.3,425.8 C22.7,430.1 21.5,434.9 21.5,438.9 M39.4,426.2 C37,425.8 34.6,425 33,424.2 C32.2,427 32.2,429.3 33.8,430.9 C37.8,433.3 37.8,438.9 33,439.3"/><path d="M24.3,453.1 C22.7,457.1 21.5,462.7 22.3,467.4 M37,452.7 C33.8,454.7 31,458.7 31.4,462.3 C32.2,465 37.8,464.3 38.6,461.1 C39,458.7 35.4,458.3 33,460.7"/><path d="M23.1,477.7 C21.9,481.7 21.1,486.5 21.5,491.2 M27.9,477.3 C27.1,478.9 26.7,480.1 26.7,480.9 M27.1,479.3 C31.4,477.3 36.2,477 39.8,477.7 C37.8,482.5 35.4,487.3 33.4,491.6"/><path d="M26.7,503.9 C25.5,507.1 24.7,510.3 24.3,513.9 M39.4,506.3 C35.8,507.9 32.6,509.1 31,510.7 C29.5,513.1 32.6,515.8 36.2,515 C37.8,513.9 36.6,508.7 35.4,504.7 C34.6,501.6 35,500 35.8,501.6"/><path d="M27.1,527.7 C25.1,531.7 23.5,537.3 24.7,542 M38.6,530.1 C35,527 31.8,529.3 32.6,532.5 C34.2,534.9 39,533.3 39.4,530.1 C38.2,534.9 36.6,538.1 35,541.6"/><path d="M25.4,554.9 C28.5,552.4 33,554.3 31.7,557.5 C29.8,560.6 24.7,563.2 21.5,565.1 C26,564.4 31.1,563.8 34.9,562.5 M38.7,553.6 C34.9,554.9 34.3,561.3 37.4,561.3 C41.9,561.3 45.1,557.5 43.2,553.6 C41.9,551.7 40,552.4 38.7,553.6"/><path d="M24.1,591.8 C28.5,588.6 33.6,589.9 33,594.3 C31.1,597.5 26.6,599.4 23.5,602 C28.5,602 33.6,602 37.4,601.3 M41.9,589.3 C41.3,593.1 40.6,598.2 41.3,602"/><path d="M24.1,607.7 C20.3,612.2 20.3,618.5 24.7,622.3 M29.2,610.9 C33,609 36.2,610.9 34.9,614.1 C33,616.6 29.8,618.5 27.9,619.8 C31.1,619.8 34.3,619.5 37.4,619.2 M39.4,610.3 C43.2,608.3 47,610.3 45.7,613.4 C43.8,616 40.6,617.9 38.1,619.2 C41.9,619.5 45.1,619.5 47.6,619.2 M49.5,607.7 C52.7,612.2 52.7,618.5 47.6,623.6"/><path d="M65.4,587.6 L79,595.9"/><path d="M71.4,585.4 L67,598.7"/><path d="M80.3,586.7 L75.2,591.1"/><path d="M63.5,598.7 L75.2,603.5"/><path d="M82.2,597.5 L70.8,603.2"/><path d="M71.7,597.8 C70.8,602.2 68.9,606 66.3,609.2"/><path d="M71.4,603.5 L78.7,608.2"/><path d="M88.6,600.3 C89.8,597.1 93,595.2 95.2,595.2 C98.1,595.9 99.7,599 99,601.6 C98.4,603.2 96.8,603.2 96.2,602.2"/><path d="M88.6,600.3 C91.7,598.4 93.6,596.5 94.9,595.2"/><path d="M111.3,588.2 L106.9,592.6 L113.9,593.6"/><path d="M106.9,598.3 L119,597"/><path d="M112,597 L111.3,605.9"/><path d="M105.6,605.3 L108.8,601.5"/><path d="M115.2,601.5 L119,605.9"/><path d="M121.2,584.3 L122.1,593.2"/><path d="M115.5,594.2 C121.5,593.2 127.9,592.3 133.6,591.3"/><path d="M128.5,591.7 C125.3,598.9 120.9,603.4 117.7,605.9"/><path d="M117.7,598.3 C122.8,602.1 127.9,605.9 132.9,606.9"/><path d="M143.7,583.1 L146.3,584.7"/><path d="M138.7,589.7 C144.4,588.2 150.1,586.3 155.8,585"/><path d="M145.6,586.9 L146.3,590.7"/><path d="M152.6,586.9 L152,590.7"/><path d="M137.4,596.7 C144.4,594.5 152,591.9 159,589.7"/><path d="M143.1,597.4 L144.4,605.3"/><path d="M143.1,597.4 C148.2,596.4 152,595.8 155.8,596.4 L155.2,602.8"/><path d="M144,601.5 L155.2,599.9"/><path d="M140.6,607.2 C146.9,605.9 153.3,604 160.2,602.1"/><path d="M150.7,604 L151.7,613.2"/></g></svg>
</body></html>
